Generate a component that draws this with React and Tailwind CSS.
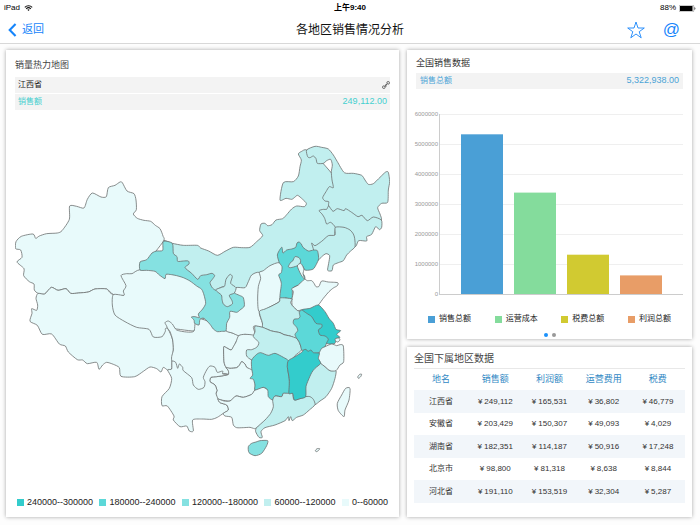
import React from "react";

const LEVELS = {
  a: "#33cccc",
  b: "#5cd8d8",
  c: "#85e1e1",
  d: "#c1efef",
  e: "#e8fafb",
};

// Painted in order: a later province covers the edge of an earlier one.
const PROVINCES = [
  ["内蒙古", "d", "490,304 517,310 550,316 592,316 602,324 626,333 652,346 675,334 700,322 725,323 750,322 770,305 788,287 779,272 783,252 795,250 803,257 816,254 828,240 848,236 860,224 875,207 890,198 913,200 919,190 908,178 893,166 884,172 875,178 858,175 840,180 850,128 880,125 895,108 900,80 904,60 895,42 905,34 920,30 960,60 1030,150 990,200 1040,262 1010,310 945,345 860,370 810,420 740,480 690,485 650,465 600,425 540,380"],
  ["黑龙江省", "d", "920,30 945,19 965,22 985,27 1000,45 1012,65 1033,98 1060,100 1085,106 1095,120 1105,133 1120,131 1140,112 1157,96 1165,97 1169,125 1165,150 1163,187 1145,190 1133,203 1140,222 1144,240 1120,250 1060,240 1000,222 986,198 986,185 975,183 968,173 978,155 988,140 1000,143 996,120 994,95 997,75 992,58 980,62 970,70 952,70 948,56 940,48 930,53 923,50"],
  ["吉林省", "d", "986,198 999,214 1012,206 1032,212 1037,206 1055,217 1074,230 1086,226 1102,242 1120,231 1144,240 1145,262 1138,269 1127,260 1115,283 1100,290 1100,303 1076,302 1065,320 1030,300 1005,285 1006,262 992,247 980,252 974,235 966,222 957,212 970,208 980,208"],
  ["辽宁省", "d", "1006,262 1032,262 1050,270 1060,282 1064,295 1065,320 1052,333 1040,345 1030,362 1015,368 1000,375 996,392 983,391 986,370 989,347 978,341 965,350 955,360 945,350 941,330 935,309 945,317 965,304 985,287 1005,285"],
  ["新疆", "e", "490,304 489,288 480,266 466,256 452,244 432,241 412,235 400,222 409,209 408,180 402,161 381,153 367,128 360,126 345,136 325,143 319,170 303,171 277,159 262,178 252,204 230,199 209,198 208,238 186,272 172,279 140,281 118,288 107,295 99,282 64,289 48,305 47,326 62,330 66,352 51,366 72,386 71,407 88,425 102,432 103,450 114,460 134,462 154,442 174,451 198,446 212,460 236,459 265,456 285,447 320,447 340,464 372,466 400,440 440,370"],
  ["西藏", "e", "114,460 108,475 113,495 110,511 95,506 96,520 90,544 112,556 127,583 155,582 178,612 196,618 205,636 232,659 248,660 262,671 290,667 297,688 308,675 320,667 340,673 358,683 363,709 404,710 430,694 450,681 470,686 483,696 490,682 503,690 515,687 516,664 520,630 518,600 502,564 450,500 340,464 320,447 285,447 265,456 236,459 212,460 198,446 174,451 154,442 134,462"],
  ["青海省", "e", "340,464 372,466 370,453 378,437 363,407 380,401 396,401 421,389 500,390 620,440 620,500 600,560 582,573 502,564 496,574 486,590 460,591 447,568 410,562 375,545 345,525 337,495"],
  ["四川省", "e", "495,548 505,543 517,552 530,570 560,576 582,573 590,535 640,550 678,572 716,587 708,606 700,622 693,630 677,622 671,622 672,665 678,682 685,692 685,703 668,702 640,740 595,760 560,740 516,664 520,630 518,600 510,575 502,564 500,558"],
  ["陕西省", "e", "708,443 735,443 745,425 755,405 778,397 820,420 810,500 778,515 787,548 788,562 765,558 760,562 765,587 735,583 716,587 697,579 678,572 670,540 700,490 700,465"],
  ["甘肃省", "c", "490,304 517,310 520,340 531,350 533,364 550,363 565,363 567,372 555,383 575,400 593,418 602,407 620,404 636,400 644,407 637,418 630,428 636,442 647,450 670,440 700,450 703,459 718,466 730,473 733,498 720,510 710,517 690,514 689,532 680,550 678,572 665,574 652,575 640,567 630,553 612,535 600,538 597,555 584,550 582,540 574,531 585,530 598,533 595,522 608,507 617,490 612,465 605,448 590,438 570,423 550,413 530,407 515,404 498,403 495,416 478,405 465,394 440,391 420,390 420,366 440,359 456,339 470,333 488,331"],
  ["宁夏", "d", "647,450 665,442 674,438 678,418 690,403 697,410 692,430 708,443 703,459 690,464 688,468 696,482 697,492 682,500 670,492 666,478 664,465"],
  ["山西省", "e", "778,397 790,392 810,377 838,368 860,390 860,450 840,474 838,485 815,498 778,515 773,480 775,440 782,415"],
  ["河北省", "b", "838,368 832,345 840,328 846,322 849,339 860,330 875,327 887,322 891,309 897,306 904,312 909,322 925,333 941,330 952,332 955,345 955,360 942,385 930,390 915,390 907,378 895,385 912,405 914,418 895,435 878,445 876,477 858,474 840,474 844,430 836,405 844,398 846,380"],
  ["北京市", "d", "865,380 872,367 878,363 885,350 897,353 902,362 900,370 890,378 872,383"],
  ["天津市", "e", "892,378 902,370 909,380 912,390 909,400 914,418 903,404"],
  ["山东省", "e", "913,418 922,422 935,422 942,430 948,440 957,439 965,423 985,426 1013,428 1012,437 1000,444 987,455 970,475 955,495 930,520 905,510 893,512 877,497 876,477 880,455 875,446 895,435"],
  ["河南省", "d", "778,515 795,507 815,498 838,485 840,474 858,474 876,477 872,487 877,497 893,512 910,520 910,580 890,595 870,588 852,584 840,578 815,573 800,567 788,562 787,548"],
  ["重庆市", "e", "716,587 735,583 765,587 790,610 765,655 758,692 740,682 735,672 725,665 718,676 710,683 690,685 678,682 672,665 671,622 677,622 693,630 700,620 708,606"],
  ["湖北省", "d", "765,558 788,562 800,567 815,573 840,578 852,584 870,588 890,595 897,605 902,618 905,630 885,647 865,670 800,680 755,660 740,648 740,630 755,629 770,622 776,612 775,605 760,590 765,575"],
  ["江苏省", "a", "905,510 930,505 955,495 975,515 987,535 1000,550 1008,568 1022,572 1010,583 1020,592 1008,597 1005,610 990,612 970,606 940,570 920,530"],
  ["安徽省", "b", "905,510 920,520 935,530 948,550 965,553 965,562 955,570 960,585 975,588 985,597 980,608 975,620 958,638 933,640 918,632 905,630 902,618 897,605 890,595 885,583 893,572 890,562 880,550 882,538 895,536 900,530 898,517"],
  ["贵州省", "e", "678,682 690,685 710,683 718,676 725,665 735,672 740,682 758,692 765,720 765,750 755,763 730,772 708,768 690,783 654,777 648,760 651,752 645,735 630,725 633,712 650,710 670,707 685,703 685,692"],
  ["云南省", "e", "516,664 527,667 533,685 538,672 548,682 550,692 575,713 580,735 595,748 612,742 615,725 610,712 620,690 630,678 645,682 652,697 668,693 668,702 685,703 670,707 650,710 633,712 630,725 645,735 651,752 648,760 654,777 660,788 680,795 685,810 670,820 652,832 635,838 605,837 578,840 580,873 568,873 560,858 540,860 520,840 522,828 502,798 486,797 486,770 508,745 515,715 503,690 515,687"],
  ["广西", "e", "765,750 790,742 830,770 820,820 770,863 760,865 750,862 730,863 710,863 700,855 695,832 675,828 670,820 685,810 680,795 660,788 654,777 672,783 690,783 708,768 730,772 755,763"],
  ["湖南省", "b", "755,660 770,643 782,638 805,646 825,640 850,652 865,662 862,680 868,720 867,760 850,760 845,770 825,768 818,780 805,770 803,750 790,742 765,750 765,735 760,718 750,715 758,705 755,685"],
  ["福建省", "d", "962,670 975,680 990,692 1008,692 1005,715 995,745 978,770 960,783 945,794 930,790 917,770 915,700 940,675"],
  ["广东省", "d", "818,780 825,768 845,770 850,760 867,760 878,760 883,780 917,770 930,770 940,778 945,794 928,810 910,825 890,832 877,842 872,830 867,842 865,830 855,842 825,855 795,863 783,875 787,892 777,892 767,875 770,863 795,840 812,820 820,800"],
  ["浙江省", "e", "958,638 965,625 975,620 995,612 1010,617 1020,614 1030,618 1031,665 1020,675 1008,692 990,692 975,680 962,670 950,655"],
  ["江西省", "a", "865,662 885,650 905,637 910,630 918,628 924,634 933,630 940,638 958,640 955,655 962,670 945,685 935,698 925,720 918,740 917,770 900,776 883,780 878,760 867,760 868,720 862,680"],
  ["上海市", "e", "1006,596 1016,594 1020,600 1013,606 1006,602"],
  ["海南省", "c", "755,910 768,906 780,902 803,902 800,917 785,940 765,947 747,938 745,920"],
  ["台湾省", "e", "1037,745 1050,745 1047,780 1035,810 1032,830 1015,812 1012,790 1025,765"],
  ["钓鱼岛", "e", "1073,711 1079,703 1085,703 1082,710 1076,715"],
  ["东沙群岛", "e", "946,932 951,926 959,926 955,932 949,935"],
];

// Closed Catmull-Rom curve through a province's border points.
function border(points) {
  const p = points.split(" ").map((s) => s.split(",").map(Number));
  const n = p.length;
  let d = `M${p[0][0]} ${p[0][1]}`;
  for (let i = 0; i < n; i++) {
    const a = p[(i + n - 1) % n];
    const b = p[i];
    const c = p[(i + 1) % n];
    const e = p[(i + 2) % n];
    const k = 0.12;
    d += `C${b[0] + (c[0] - a[0]) * k} ${b[1] + (c[1] - a[1]) * k} ${c[0] - (e[0] - b[0]) * k} ${c[1] - (e[1] - b[1]) * k} ${c[0]} ${c[1]}`;
  }
  return d + "Z";
}

const CARD = "bg-white shadow-[0_0_4px_rgba(0,0,0,0.35)]";

function StatusBar() {
  return (
    <div className="grid h-4 grid-cols-3 items-center px-1 text-[8px] text-black">
      <div className="flex items-center gap-1">
        <span>iPad</span>
        <svg viewBox="0 0 18 13" className="h-[6px] w-[9px]" fill="none" stroke="#111" strokeWidth="2.4">
          <path d="M1 5a11.5 11.5 0 0 1 16 0M4 8.2a7.2 7.2 0 0 1 10 0" />
          <path d="M6.500 10.400a3.600 3.600 0 0 1 5 0L9 13z" fill="#111" stroke="none" />
        </svg>
      </div>
      <span className="text-center font-bold">上午9:40</span>
      <div className="flex items-center justify-end gap-[3px]">
        <span>88%</span>
        <svg viewBox="0 0 34 14" className="h-[7px] w-[17px]">
          <rect x="0.500" y="0.500" width="29" height="13" rx="1.500" fill="none" stroke="#777" />
          <rect x="2" y="2" width="25" height="10" fill="#000" />
          <path d="M31 4q3.500 3 0 6z" fill="#222" />
        </svg>
      </div>
    </div>
  );
}

function NavBar() {
  return (
    <header className="grid h-7 grid-cols-[1fr_auto_1fr] items-center border-b border-[#d8d8d8] px-2">
      <button className="flex items-center gap-[5px] justify-self-start text-[11px] text-[#1685fb]">
        <svg viewBox="0 0 10 16" className="h-[14px] w-[9px]" fill="none" stroke="currentColor" strokeWidth="2.4">
          <path d="M8.500 1.200 1.800 8l6.700 6.800" />
        </svg>
        返回
      </button>
      <h1 className="text-[12px] text-[#111]">各地区销售情况分析</h1>
      <div className="flex items-center gap-[18px] justify-self-end pr-3 text-[#1685fb]">
        <button aria-label="收藏">
          <svg viewBox="0 0 18 18" className="block size-[18px]" fill="none" stroke="currentColor" strokeWidth="0.900">
            <path d="M9 1 11 7h6.300l-5.100 3.700 2 6.100L9 13l-5.200 3.800 2-6.100L.7 7H7z" />
          </svg>
        </button>
        <button className="text-[17px] leading-[18px]">@</button>
      </div>
    </header>
  );
}

const RANGES = [
  ["bg-[#33cccc]", "240000--300000"],
  ["bg-[#5cd8d8]", "180000--240000"],
  ["bg-[#85e1e1]", "120000--180000"],
  ["bg-[#c1efef]", "60000--120000"],
  ["bg-[#e8fafb]", "0--60000"],
];

function HeatMapCard() {
  return (
    <section className={`${CARD} flex flex-col px-[9px] pb-[9px] pt-2`}>
      <h2 className="text-[9px] leading-[15px] text-[#444]">销量热力地图</h2>
      <div className="mt-1 flex h-4 items-center justify-between bg-[#f3f3f3] pl-[3px] text-[8px] text-[#222]">
        <span>江西省</span>
        <button aria-label="联动">
          <svg viewBox="0 0 24 24" className="block size-[8px]" fill="none" stroke="#555" strokeWidth="2.600">
            <circle cx="5.500" cy="18.500" r="4" />
            <circle cx="18.500" cy="5.500" r="4" />
            <path d="m8 16 8-8M11 18l2-5M13 9l-2 3" />
          </svg>
        </button>
      </div>
      <div className="mt-px flex h-4 items-center justify-between bg-[#f3f3f3] px-[3px] text-[#45cfcf]">
        <span className="text-[8px]">销售额</span>
        <span className="text-[9px]">249,112.00</span>
      </div>
      <svg viewBox="45 0 1125 960" className="mt-[30px] w-full" role="img" aria-label="销量热力地图">
        {PROVINCES.map(([name, level, points]) => (
          <path key={name} d={border(points)} fill={LEVELS[level]} stroke="#6c7070" strokeWidth="2.400" strokeLinejoin="round" />
        ))}
      </svg>
      <ul className="mt-auto flex items-center justify-between px-[2px] text-[9px] leading-3 text-[#222]">
        {RANGES.map(([swatch, label]) => (
          <li key={label} className="flex items-center gap-[3px]">
            <span className={`size-[7px] ${swatch}`} />
            {label}
          </li>
        ))}
      </ul>
    </section>
  );
}

const BARS = [
  ["销售总额", 5322938, "#4a9fd6", "bg-[#4a9fd6]"],
  ["运营成本", 3380000, "#84dc9c", "bg-[#84dc9c]"],
  ["税费总额", 1310000, "#d1ca31", "bg-[#d1ca31]"],
  ["利润总额", 620000, "#e89d67", "bg-[#e89d67]"],
];

function SalesCard() {
  const ticks = [0, 1, 2, 3, 4, 5, 6];
  return (
    <section className={`${CARD} flex flex-col px-[9px] pb-[2px] pt-[6px]`}>
      <h2 className="text-[9px] leading-[15px] text-[#333]">全国销售数据</h2>
      <div className="mt-[2px] flex h-4 items-center justify-between bg-[#f3f3f3] px-1 text-[#4ba3d6]">
        <span className="text-[8px]">销售总额</span>
        <span className="text-[9px]">5,322,938.00</span>
      </div>
      <svg viewBox="0 0 267 192" className="mt-5 w-full overflow-visible" role="img" aria-label="全国销售数据">
        {ticks.map((t) => (
          <g key={t}>
            <path d={`M23 ${185 - t * 30}.500H267`} stroke={t ? "#efefef" : "#ccc"} />
            <text x="22" y={187 - t * 30} textAnchor="end" fontSize="6" fill="#999">
              {t ? t + "000000" : "0"}
            </text>
          </g>
        ))}
        <path d="M23.500 5v181" stroke="#ccc" />
        {BARS.map(([name, value, color], i) => (
          <rect key={name} x={45 + i * 53} y={185 - (value / 1000000) * 30} width="42" height={(value / 1000000) * 30} fill={color} />
        ))}
      </svg>
      <ul className="mt-3 flex justify-between px-3 text-[8px] leading-3 text-[#222]">
        {BARS.map(([name, , , swatch]) => (
          <li key={name} className="flex items-center gap-1">
            <span className={`size-[7px] ${swatch}`} />
            {name}
          </li>
        ))}
      </ul>
      <div className="mt-auto flex justify-center gap-1">
        <button aria-label="第一页" className="size-1 rounded-full bg-[#1a91fb]" />
        <button aria-label="第二页" className="size-1 rounded-full bg-[#999]" />
      </div>
    </section>
  );
}

const HEAD = ["地名", "销售额", "利润额", "运营费用", "税费"];
const ROWS = [
  ["江西省", "249,112", "165,531", "36,802", "46,779"],
  ["安徽省", "203,429", "150,307", "49,093", "4,029"],
  ["湖南省", "182,351", "114,187", "50,916", "17,248"],
  ["北京市", "98,800", "81,318", "8,638", "8,844"],
  ["河北省", "191,110", "153,519", "32,304", "5,287"],
];

function RegionCard() {
  return (
    <section className={`${CARD} px-[7px] pb-[14px] pt-1`}>
      <h2 className="border-b border-[#e8e8e8] pb-[2px] text-[10px] leading-[15px] text-[#444]">全国下属地区数据</h2>
      <table className="w-full table-fixed border-collapse text-center text-[8px] text-[#333]">
        <thead>
          <tr className="h-[21px] text-[9px] text-[#2f88c4]">
            {HEAD.map((h) => (
              <th key={h} scope="col" className="p-0 font-normal">{h}</th>
            ))}
          </tr>
        </thead>
        <tbody>
          {ROWS.map(([name, ...values]) => (
            <tr key={name} className="h-[23px] odd:bg-[#f2f6fa] even:h-[22px]">
              <th scope="row" className="p-0 font-normal">{name}</th>
              {values.map((v, i) => (
                <td key={i} className="p-0">
                  <span className="inline-flex items-center gap-[2px]">
                    <span>¥</span>
                    {v}
                  </span>
                </td>
              ))}
            </tr>
          ))}
        </tbody>
      </table>
    </section>
  );
}

export default function App() {
  return (
    <div className="flex min-h-screen flex-col bg-white font-['Liberation_Sans','Noto_Sans_CJK_SC',sans-serif]">
      <StatusBar />
      <NavBar />
      <main className="grid flex-1 grid-cols-[393fr_285fr] gap-2 bg-[#fdfdfd] pb-2 pl-[6px] pr-2 pt-[6px]">
        <HeatMapCard />
        <div className="grid grid-rows-[1fr_auto] gap-2">
          <SalesCard />
          <RegionCard />
        </div>
      </main>
    </div>
  );
}
